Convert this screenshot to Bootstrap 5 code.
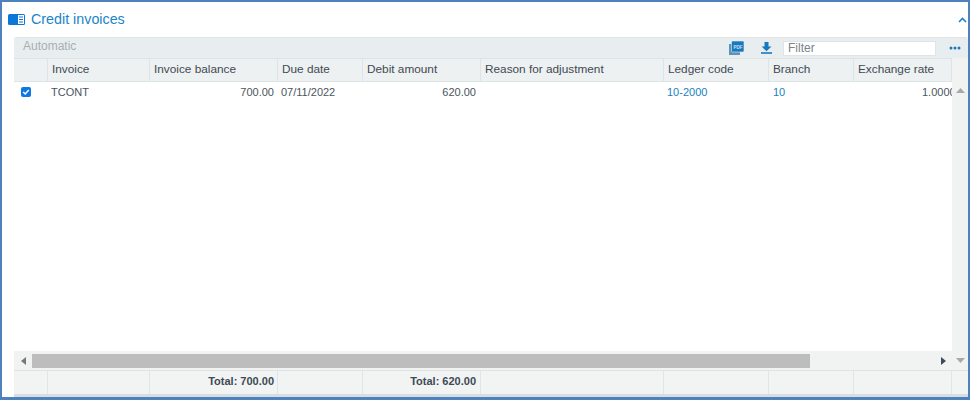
<!DOCTYPE html>
<html lang="en"><head><meta charset="utf-8"><title>Credit invoices</title>
<link href="https://cdn.jsdelivr.net/npm/bootstrap@5.3.0/dist/css/bootstrap.min.css" rel="stylesheet">
<style>
html,body{margin:0;height:400px;overflow:hidden;background:#fff}
body{font-family:"Liberation Sans",Arial,sans-serif;font-size:11px;color:#4a5560}
.frame{width:970px;height:400px;border:2px solid #4f81bd;border-bottom-width:3px;background:#fff}
.ttl-row{height:35px;padding:0 1px 0 6px}
.ttl-text{font-size:14.3px;color:#1a85c8;margin-left:6px}
.panel{margin-left:12px;flex:1 1 auto;min-height:0}
.tbar{height:21px;background:#e8eeef;border-radius:3px 3px 0 0;border-top:1px solid #dfe5e7;padding-right:7px}
.auto{font-size:12px;font-weight:400;color:#a9aeb1;margin-left:9px;margin-top:-4px}
.filt{width:153px;height:15px;background:#fff;border:1px solid #dfe5e7;font-size:12px;color:#7b8288;padding-left:4px;line-height:13px;margin-left:11px;margin-right:13px}
.dl-ic{margin-left:17px}
.mid{flex:1 1 auto;min-height:0}
.gridwrap{width:938px;overflow:hidden}
.dtable{table-layout:fixed;width:938px;border-collapse:separate;border-spacing:0;margin:0}
.dtable th{height:24px;background:#edf1f2;font-weight:400;font-size:11.8px;color:#3f4a52;padding:0 4px;border-right:1px solid #dde4e7;border-bottom:1px solid #dde4e7;border-top:1px solid #dde4e7;white-space:nowrap}
.dtable td{height:21px;font-size:11px;color:#4a5560;padding:0 3px;white-space:nowrap;overflow:hidden}
.dtable td.lnk{color:#1a7fc0}
.dtable td.branch{padding-left:4px}
.dtable td.rt{text-align:right;padding-right:4px}
.dtable td.rt2{text-align:right;padding-right:5px}
.dtable td.clip{text-align:left;padding-left:68px}
.cbx{display:block;width:10px;height:10px;background:#0b78e3;border-radius:2px;margin:-2px 0 0 7px}
.vbar{width:16px;background:#f1f2f2;padding-top:30px}
.hbar{height:19px;background:#f1f2f2}
.arrow-l{width:18px}
.thumb{width:778px;height:14px;background:#bdbdbd}
.arrow-r{margin-left:131px}
.arrow-d{margin-left:auto;margin-right:3px}
.foot{display:grid;grid-template-columns:34px 102px 128px 85px 118px 183px 105px 85px 98px 16px;height:23px;background:#f2f3f3;border-top:1px solid #dfe3e4;border-bottom:3px solid #d6dee2;flex:0 0 auto;box-sizing:content-box}
.foot>div{border-right:1px solid #dde6ea;text-align:right;padding-right:3px;font-size:11px;font-weight:700;color:#3c4a54;line-height:20px}
.foot>div.tot2{padding-right:4px}
.foot>div:last-child{border-right:0}
</style></head>
<body>
<div class="frame d-flex flex-column">
  <div class="ttl-row d-flex align-items-center flex-shrink-0">
    <svg width="17" height="11" viewBox="0 0 17 11"><rect width="17" height="11" rx="1.5" fill="#0b78d8"/><rect x="10" y="1" width="6" height="9" fill="#fff"/><path d="M11 3h4M11 5.5h4M11 8h4" stroke="#0b78d8" stroke-width="1.2"/></svg>
    <span class="ttl-text">Credit invoices</span>
    <svg class="ms-auto" width="9" height="6" viewBox="0 0 9 6"><path d="M1 5l3.500-3.500L8 5" fill="none" stroke="#1a85c8" stroke-width="1.6"/></svg>
  </div>
  <div class="panel d-flex flex-column">
    <div class="tbar d-flex align-items-center flex-shrink-0">
      <span class="auto">Automatic</span>
      <svg class="ms-auto" width="15" height="15" viewBox="0 0 15 15"><rect x="0" y="3" width="11" height="11" fill="#5e93bf"/><rect x="2.500" y="0" width="12.500" height="11" rx="1" fill="#1a79bd" stroke="#e8eeef" stroke-width=".6"/><text x="4.500" y="7.500" font-size="4.500" font-weight="700" fill="#cfe3f2" font-family="Liberation Sans">PDF</text></svg>
      <svg class="dl-ic" width="11" height="12" viewBox="0 0 11 12"><path d="M3.500 0h4v4.500H10.500L5.500 9.200.5 4.500h3z" fill="#1a79bd"/><rect y="10.200" width="11" height="1.600" fill="#1a79bd"/></svg>
      <div class="filt">Filter</div>
      <svg width="12" height="4" viewBox="0 0 12 4"><circle cx="2" cy="2" r="1.500" fill="#1a79bd"/><circle cx="6" cy="2" r="1.500" fill="#1a79bd"/><circle cx="10" cy="2" r="1.500" fill="#1a79bd"/></svg>
    </div>
    <div class="mid d-flex">
      <div class="gridwrap flex-shrink-0">
        <table class="dtable">
          <colgroup><col style="width:34px"><col style="width:102px"><col style="width:128px"><col style="width:85px"><col style="width:118px"><col style="width:183px"><col style="width:105px"><col style="width:85px"><col style="width:98px"></colgroup>
          <thead><tr><th></th><th>Invoice</th><th>Invoice balance</th><th>Due date</th><th>Debit amount</th><th>Reason for adjustment</th><th>Ledger code</th><th>Branch</th><th>Exchange rate</th></tr></thead>
          <tbody><tr>
            <td class="p-0"><span class="cbx"><svg class="d-block" width="10" height="10" viewBox="0 0 10 10"><path d="M2.200 5l2 2 3.600-4" fill="none" stroke="#fff" stroke-width="1.500"/></svg></span></td>
            <td>TCONT</td><td class="rt">700.00</td><td>07/11/2022</td><td class="rt2">620.00</td><td></td><td class="lnk">10-2000</td><td class="lnk branch">10</td><td class="clip">1.0000</td>
          </tr></tbody>
        </table>
      </div>
      <div class="vbar flex-grow-1 d-flex justify-content-center align-items-start">
        <svg class="d-block" width="9" height="5" viewBox="0 0 9 5"><path d="M0 5l4.500-5L9 5z" fill="#a8a8a8"/></svg>
      </div>
    </div>
    <div class="hbar d-flex align-items-center flex-shrink-0">
      <div class="arrow-l d-flex justify-content-center"><svg class="d-block" width="5" height="8" viewBox="0 0 5 8"><path d="M5 0L0 4l5 4z" fill="#777"/></svg></div>
      <div class="thumb"></div>
      <svg class="arrow-r d-block" width="5" height="8" viewBox="0 0 5 8"><path d="M0 0l5 4-5 4z" fill="#3c4a5a"/></svg>
      <svg class="arrow-d d-block" width="9" height="5" viewBox="0 0 9 5"><path d="M0 0l4.500 5L9 0z" fill="#a8a8a8"/></svg>
    </div>
    <div class="foot">
      <div></div><div></div><div>Total: 700.00</div><div></div><div class="tot2">Total: 620.00</div><div></div><div></div><div></div><div></div><div></div>
    </div>
  </div>
</div>
<script src="https://cdn.jsdelivr.net/npm/bootstrap@5.3.0/dist/js/bootstrap.bundle.min.js"></script>
</body></html>
